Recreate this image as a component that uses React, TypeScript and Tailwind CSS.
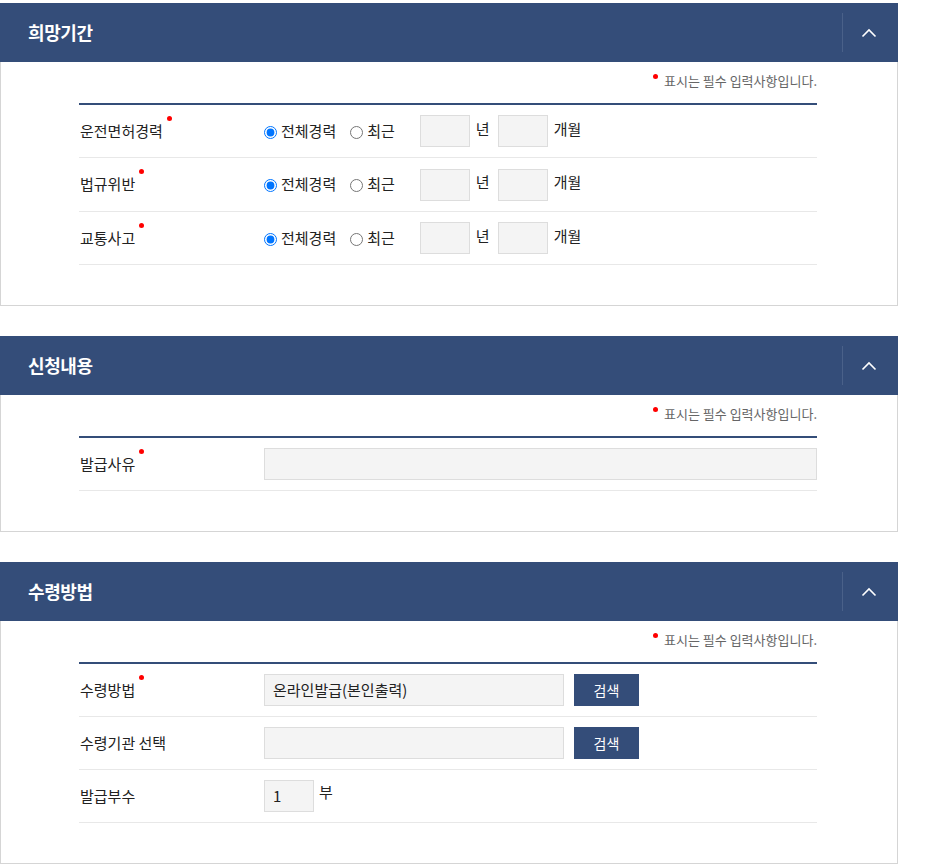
import React from 'react';

const FONT = { fontFamily: '"Noto Sans CJK KR", "Noto Sans", sans-serif' };

const RequiredDot = () => (
  <span className="inline-block w-[5px] h-[5px] rounded-full bg-[#ff0000] ml-[4px] -translate-y-[16px]" />
);

const SectionHeader = ({ title }: { title: string }) => (
  <div className="flex items-center h-[59px] bg-[#344d79]">
    <h2 className="flex-1 pl-[28px] text-[18px] font-bold text-white tracking-[-0.4px]">{title}</h2>
    <div className="w-px h-[39px] bg-[#4a6189]" />
    <button className="w-[55px] h-full flex items-center justify-center pr-[4px]">
      <svg width="16" height="10" viewBox="0 0 16 10" fill="none">
        <path d="M1.5 8.5 L8 2 L14.5 8.5" stroke="white" strokeWidth="1.6" />
      </svg>
    </button>
  </div>
);

const Notice = () => (
  <div className="h-[41px] pt-[9px] text-right text-[13px] leading-[20px] text-[#666]">
    <span className="inline-block w-[5px] h-[5px] rounded-full bg-[#ff0000] mr-[6px] -translate-y-[7px]" />
    표시는 필수 입력사항입니다.
  </div>
);

const Row = ({
  label,
  required,
  tall,
  children,
}: {
  label: string;
  required?: boolean;
  tall?: boolean;
  children: React.ReactNode;
}) => (
  <div className={`flex items-center ${tall ? 'h-[54px]' : 'h-[53px]'} border-b border-[#e8e8e8]`}>
    <div className="w-[185px] pl-px text-[15px] text-[#222]">
      {label}
      {required && <RequiredDot />}
    </div>
    <div className="flex-1 flex items-center text-[15px] text-[#222]">{children}</div>
  </div>
);

const Box = ({ w, value }: { w: string; value?: string }) => (
  <div className={`${w} h-[32px] border border-[#dddddd] bg-[#f4f4f4] flex items-center px-[8px] text-[15px] text-[#222]`}>
    {value}
  </div>
);

const PeriodRow = ({ label, name, tall }: { label: string; name: string; tall?: boolean }) => (
  <Row label={label} required tall={tall}>
    <label className="flex items-center">
      <input type="radio" name={name} defaultChecked className="w-[13px] h-[13px] m-0 translate-y-[1px]" />
      <span className="ml-[4px]">전체경력</span>
    </label>
    <label className="flex items-center ml-[14px]">
      <input type="radio" name={name} className="w-[13px] h-[13px] m-0 translate-y-[1px]" />
      <span className="ml-[4px]">최근</span>
    </label>
    <div className="ml-[25px] w-[50px] h-[32px] border border-[#dddddd] bg-[#f4f4f4]" />
    <span className="ml-[6px] -translate-y-[2px]">년</span>
    <div className="ml-[8px] w-[50px] h-[32px] border border-[#dddddd] bg-[#f4f4f4]" />
    <span className="ml-[6px] -translate-y-[2px]">개월</span>
  </Row>
);

const SearchButton = () => (
  <button className="ml-[10px] w-[65px] h-[32px] bg-[#344d79] text-white text-[14px]">검색</button>
);

const Section = ({ title, children, className = '' }: { title: string; children: React.ReactNode; className?: string }) => (
  <section className={`w-[898px] ${className}`}>
    <SectionHeader title={title} />
    <div className="border border-t-0 border-[#d5d5d5] pb-[40px]">
      <div className="w-[738px] ml-[78px]">
        <Notice />
        <div className="border-t-2 border-[#344d79]">{children}</div>
      </div>
    </div>
  </section>
);

export default function App() {
  return (
    <div className="bg-white min-h-screen pt-[3px]" style={FONT}>
      <Section title="희망기간">
        <PeriodRow label="운전면허경력" name="p1" />
        <PeriodRow label="법규위반" name="p2" tall />
        <PeriodRow label="교통사고" name="p3" />
      </Section>

      <Section title="신청내용" className="mt-[30px]">
        <Row label="발급사유" required>
          <Box w="w-[553px]" />
        </Row>
      </Section>

      <Section title="수령방법" className="mt-[30px]">
        <Row label="수령방법" required>
          <Box w="w-[300px]" value="온라인발급(본인출력)" />
          <SearchButton />
        </Row>
        <Row label="수령기관 선택">
          <Box w="w-[300px]" />
          <SearchButton />
        </Row>
        <Row label="발급부수">
          <Box w="w-[50px]" value="1" />
          <span className="ml-[5px] -translate-y-[4px]">부</span>
        </Row>
      </Section>
    </div>
  );
}
